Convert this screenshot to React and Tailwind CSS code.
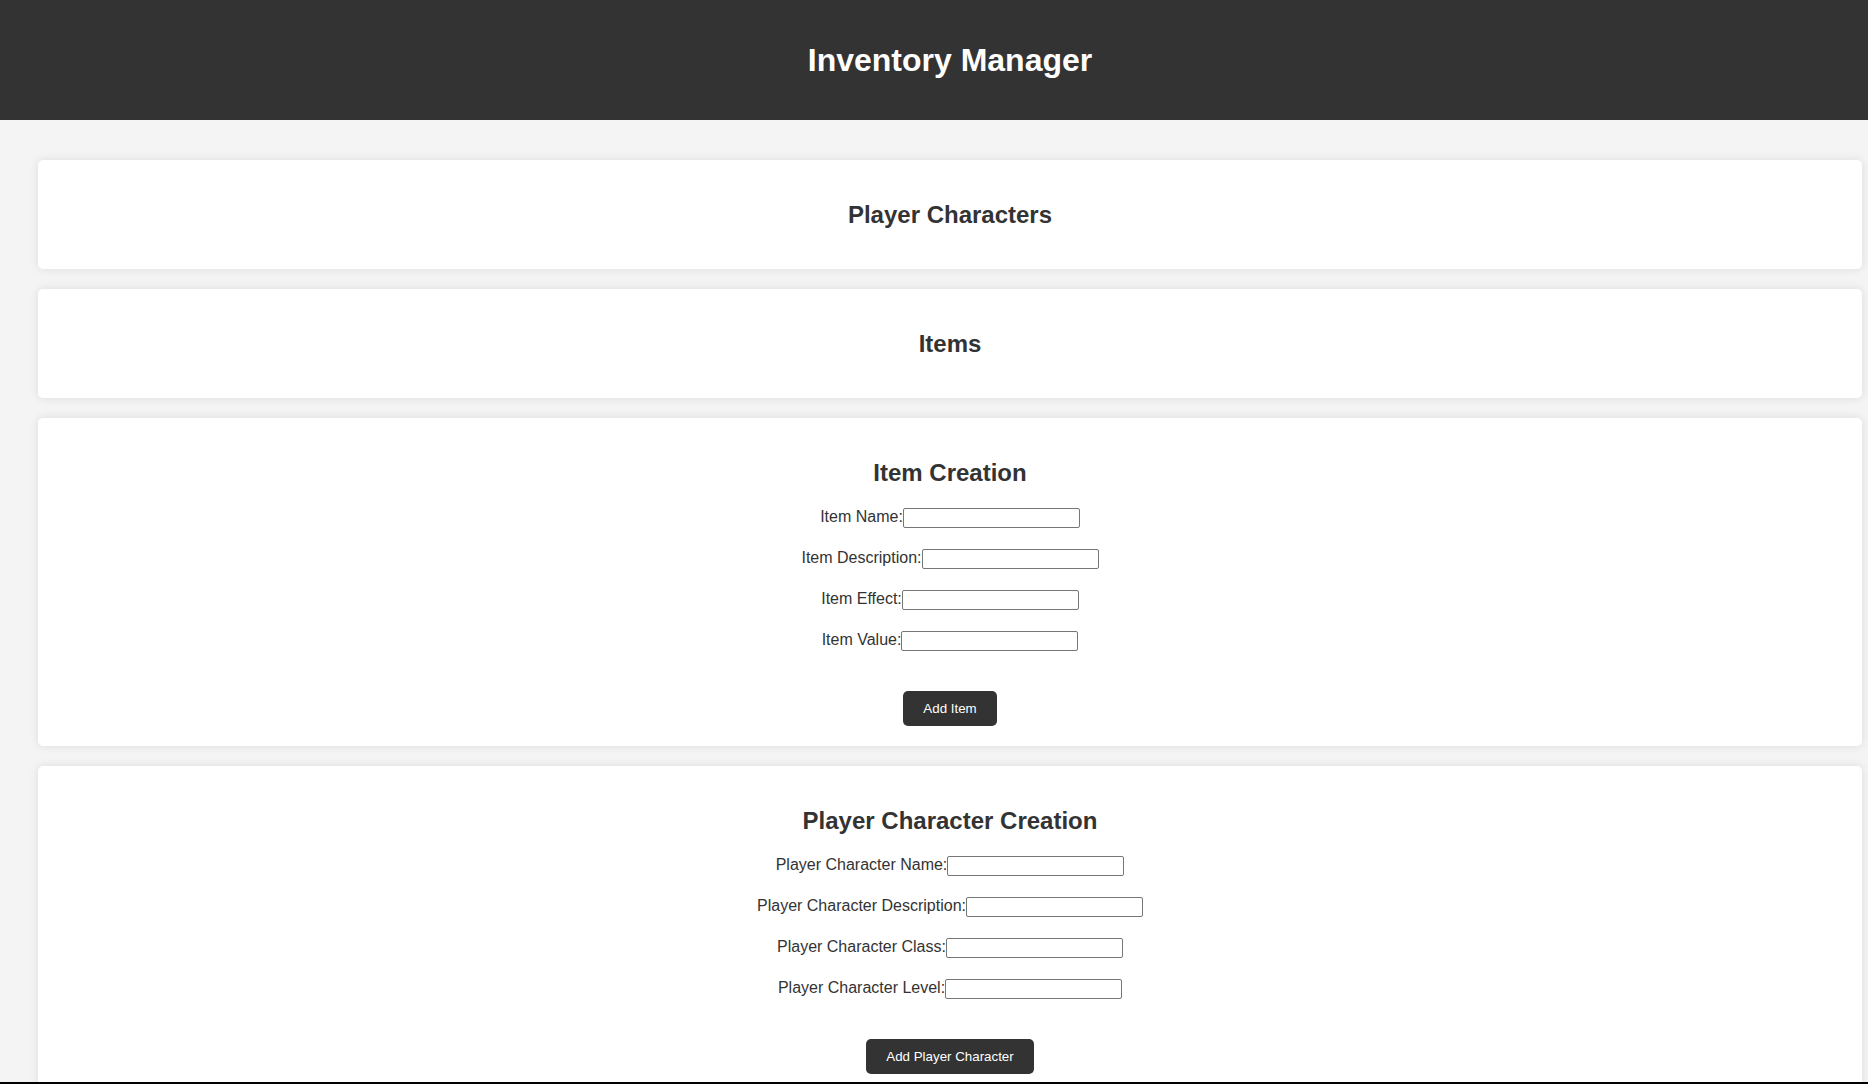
import React from "react";

function Row({ label }) {
  return (
    <div className="h-[21px] mb-[20px] flex items-center justify-center">
      <label className="text-[16px] leading-[18px] pb-[2px] text-[#333]">{label}</label>
      <input
        type="text"
        className="w-[177px] h-[20px] border border-[#767676] rounded-[2px] bg-white px-[2px] text-[13px] outline-none"
      />
    </div>
  );
}

function Card({ title, children }) {
  return (
    <section className="bg-white rounded-[5px] shadow-[0_0_10px_rgba(0,0,0,0.1)] py-[20px] px-[20px] mb-[20px] text-center">
      <h2 className="text-[24px] font-bold leading-[29px] my-[20px] text-[#333]">{title}</h2>
      {children}
    </section>
  );
}

function Button({ children }) {
  return (
    <button className="mt-[20px] h-[35px] px-[20px] bg-[#333] text-white text-[13.33px] leading-[15px] rounded-[5px]">
      {children}
    </button>
  );
}

export default function App() {
  return (
    <div className="h-screen overflow-hidden bg-[#f4f4f4] font-['Liberation_Sans',Arial,sans-serif] text-[#333]">
      <div className="w-[1900px]">
        <header className="bg-[#333] text-white text-center py-[20px]">
          <h1 className="text-[32px] font-bold leading-[38px] my-[21px]">Inventory Manager</h1>
        </header>
        <main className="px-[38px] pt-[40px]">
          <Card title="Player Characters" />
          <Card title="Items" />
          <Card title="Item Creation">
            <form onSubmit={(e) => e.preventDefault()}>
              <Row label="Item Name:" />
              <Row label="Item Description:" />
              <Row label="Item Effect:" />
              <Row label="Item Value:" />
              <Button>Add Item</Button>
            </form>
          </Card>
          <Card title="Player Character Creation">
            <form onSubmit={(e) => e.preventDefault()}>
              <Row label="Player Character Name:" />
              <Row label="Player Character Description:" />
              <Row label="Player Character Class:" />
              <Row label="Player Character Level:" />
              <Button>Add Player Character</Button>
            </form>
          </Card>
        </main>
      </div>
      <div className="fixed bottom-0 left-0 w-full h-[2px] bg-black" />
    </div>
  );
}
